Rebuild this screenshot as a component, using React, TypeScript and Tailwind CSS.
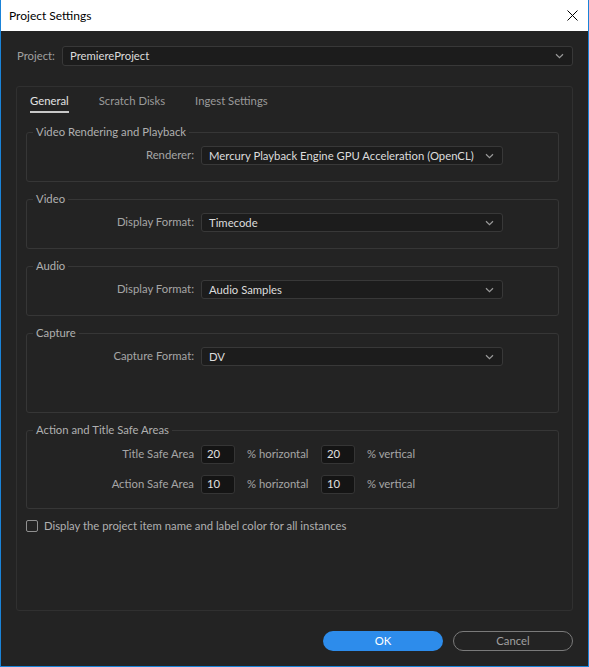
import React, { useState } from 'react';

const Chevron = () => (
  <svg width="9" height="6" viewBox="0 0 9 6" className="shrink-0">
    <path d="M1 1.2 L4.5 4.6 L8 1.2" fill="none" stroke="#9a9a9a" strokeWidth="1.2" />
  </svg>
);

const Dropdown = ({ value, className = '' }: { value: string; className?: string }) => (
  <div
    className={`h-[19px] flex items-center justify-between pl-[7px] pr-[8px] bg-[#1c1c1c] border border-[#383838] rounded-[3px] text-[#dcdcdc] ${className}`}
  >
    <span className="leading-none whitespace-nowrap">{value}</span>
    <Chevron />
  </div>
);

const Group = ({ title, children, className = '' }: { title: string; children: React.ReactNode; className?: string }) => (
  <fieldset className={`border border-[#363636] rounded-[3px] ${className}`}>
    <legend className="ml-[6px] px-[3px] text-[#b0b0b0] leading-[14px]">{title}</legend>
    {children}
  </fieldset>
);

const Row = ({ label, children }: { label: string; children: React.ReactNode }) => (
  <div className="flex items-center">
    <div className="w-[167px] text-right text-[#a6a6a6]">{label}</div>
    <div className="ml-[7px] flex items-center">{children}</div>
  </div>
);

const NumBox = ({ value }: { value: string }) => (
  <div className="w-[34px] h-[19px] flex items-center pl-[5px] bg-[#141414] border border-[#353535] rounded-[3px] text-[#e0e0e0]">
    {value}
  </div>
);

export default function App() {
  const [tab, setTab] = useState('General');
  const [checked, setChecked] = useState(false);
  const tabs = ['General', 'Scratch Disks', 'Ingest Settings'];

  return (
    <div
      className="w-[589px] h-[667px] flex flex-col border-l border-r border-b border-[#1a83d8] text-[11.3px] select-none"
      style={{ fontFamily: 'Lato, "Open Sans", sans-serif' }}
    >
      {/* Title bar */}
      <div className="h-[31px] bg-white flex items-center justify-between pl-[8px] pr-[10px] shrink-0">
        <span className="text-black text-[12px]">Project Settings</span>
        <svg width="11" height="11" viewBox="0 0 11 11">
          <path d="M0.5 0.5 L10.5 10.5 M10.5 0.5 L0.5 10.5" stroke="#000" strokeWidth="1" />
        </svg>
      </div>

      {/* Body */}
      <div className="flex-1 bg-[#232323] flex flex-col pt-[15px] px-[15px]">
        <div className="flex items-center">
          <span className="w-[46px] pl-[1px] text-[#a0a0a0]">Project:</span>
          <Dropdown value="PremiereProject" className="flex-1 h-[20px]" />
        </div>

        {/* Main panel */}
        <div className="mt-[20px] h-[525px] border border-[#303030] rounded-[3px] flex flex-col pl-[9px] pr-[13px]">
          <div className="flex gap-[30px] pl-[4px] pt-[7px]">
            {tabs.map((t) => (
              <button
                key={t}
                onClick={() => setTab(t)}
                className={`pb-[3px] border-b-2 leading-[14px] ${tab === t ? 'border-[#c8c8c8] text-[#e2e2e2]' : 'border-transparent text-[#9a9a9a]'}`}
              >
                {t}
              </button>
            ))}
          </div>

          <div className="mt-[12px] flex flex-col gap-[10px]">
            <Group title="Video Rendering and Playback" className="h-[57px] pt-[7px]">
              <Row label="Renderer:">
                <Dropdown value="Mercury Playback Engine GPU Acceleration (OpenCL)" className="w-[302px]" />
              </Row>
            </Group>
            <Group title="Video" className="h-[57px] pt-[7px]">
              <Row label="Display Format:">
                <Dropdown value="Timecode" className="w-[302px]" />
              </Row>
            </Group>
            <Group title="Audio" className="h-[57px] pt-[7px]">
              <Row label="Display Format:">
                <Dropdown value="Audio Samples" className="w-[302px]" />
              </Row>
            </Group>
            <Group title="Capture" className="h-[87px] pt-[7px]">
              <Row label="Capture Format:">
                <Dropdown value="DV" className="w-[302px]" />
              </Row>
            </Group>
            <Group title="Action and Title Safe Areas" className="h-[86px] pt-[8px]">
              <div className="flex flex-col gap-[11px]">
                <Row label="Title Safe Area">
                  <NumBox value="20" />
                  <span className="ml-[12px] w-[74px] text-[#a6a6a6]">% horizontal</span>
                  <NumBox value="20" />
                  <span className="ml-[12px] text-[#a6a6a6]">% vertical</span>
                </Row>
                <Row label="Action Safe Area">
                  <NumBox value="10" />
                  <span className="ml-[12px] w-[74px] text-[#a6a6a6]">% horizontal</span>
                  <NumBox value="10" />
                  <span className="ml-[12px] text-[#a6a6a6]">% vertical</span>
                </Row>
              </div>
            </Group>
          </div>

          <label className="mt-[9px] flex items-center gap-[6px] cursor-pointer">
            <span
              onClick={() => setChecked(!checked)}
              className="w-[12px] h-[12px] border-[1.5px] border-[#909090] rounded-[2px] flex items-center justify-center"
            >
              {checked && <span className="w-[6px] h-[6px] bg-[#c0c0c0]" />}
            </span>
            <span className="text-[#b0b0b0]">Display the project item name and label color for all instances</span>
          </label>
        </div>

        {/* Buttons */}
        <div className="mt-[20px] flex justify-end gap-[10px]">
          <button className="w-[120px] h-[20px] rounded-full bg-[#2d8ceb] text-white leading-none">OK</button>
          <button className="w-[120px] h-[20px] rounded-full border border-[#7a7a7a] text-[#a0a0a0] leading-none">Cancel</button>
        </div>
      </div>
    </div>
  );
}
